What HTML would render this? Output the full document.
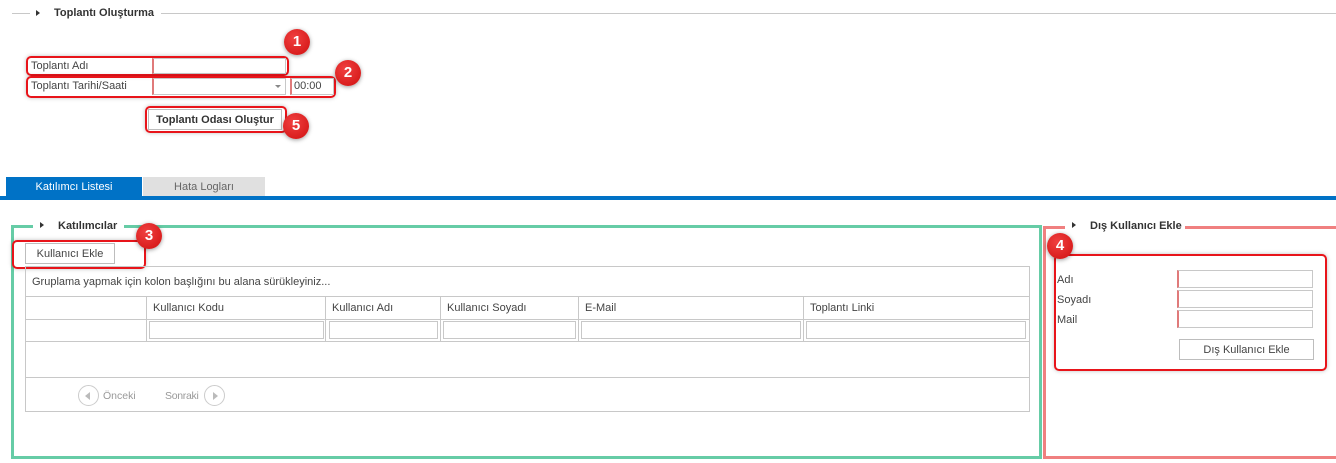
<!DOCTYPE html>
<html><head><meta charset="utf-8"><style>
*{box-sizing:border-box;margin:0;padding:0}
body{width:1336px;height:463px;background:#fff;position:relative;overflow:hidden;font-family:"Liberation Sans",sans-serif;font-size:11px;color:#444}
.a{position:absolute}
.t{position:absolute;white-space:nowrap;line-height:13px}
.inp{position:absolute;border:1px solid #c8c8c8;background:#fff}
.req{border-left:2px solid #e07a7a}
.rb{position:absolute;border:2px solid #e8141a;border-radius:5px;box-shadow:0 0 4px rgba(0,0,0,.25)}
.c{position:absolute;width:26px;height:26px;border-radius:50%;background:radial-gradient(circle at 40% 35%,#f04040,#d01010);color:#fff;font-size:15px;font-weight:bold;text-align:center;line-height:26px;box-shadow:0 1px 4px rgba(0,0,0,.4)}
.btn{position:absolute;border:1px solid #bdbdbd;background:#fff;text-align:center;color:#444}
.tri{position:absolute;width:0;height:0;border-top:3px solid transparent;border-bottom:3px solid transparent;border-left:4px solid #333}
.g{position:absolute;background:#c8c8c8}
</style></head><body>
<div class="a" style="left:12px;top:13px;width:18px;height:1px;background:#c8c8c8"></div>
<div class="tri" style="left:36px;top:10px"></div>
<div class="t" style="left:54px;top:7px;font-weight:bold;color:#333">Toplantı Oluşturma</div>
<div class="a" style="left:161px;top:13px;width:1175px;height:1px;background:#c8c8c8"></div>

<div class="rb" style="left:26px;top:56px;width:263px;height:20px"></div>
<div class="t" style="left:31px;top:60px">Toplantı Adı</div>
<div class="inp req" style="left:152px;top:58px;width:134px;height:16px"></div>
<div class="rb" style="left:26px;top:76px;width:310px;height:22px"></div>
<div class="t" style="left:31px;top:80px">Toplantı Tarihi/Saati</div>
<div class="inp req" style="left:152px;top:78px;width:134px;height:17px"></div>
<div class="a" style="left:275px;top:85px;border-left:3px solid transparent;border-right:3px solid transparent;border-top:3px solid #888"></div>
<div class="inp req" style="left:290px;top:78px;width:44px;height:17px"></div>
<div class="t" style="left:294px;top:80px">00:00</div>
<div class="rb" style="left:145px;top:106px;width:142px;height:27px"></div>
<div class="btn" style="left:148px;top:109px;width:134px;height:21px;font-weight:bold;color:#333;line-height:21px">Toplantı Odası Oluştur</div>
<div class="c" style="left:284px;top:29px">1</div>
<div class="c" style="left:335px;top:60px">2</div>
<div class="c" style="left:283px;top:113px">5</div>

<div class="a" style="left:6px;top:177px;width:136px;height:20px;background:#0072c6;color:#fff;text-align:center;line-height:20px">Katılımcı Listesi</div>
<div class="a" style="left:143px;top:177px;width:122px;height:19px;background:#e0e0e0;color:#666;text-align:center;line-height:20px">Hata Logları</div>
<div class="a" style="left:0;top:196px;width:1336px;height:4px;background:#0072c6"></div>

<div class="a" style="left:11px;top:225px;width:1031px;height:234px;border:3px solid #66cca6;border-top:0"></div>
<div class="a" style="left:11px;top:225px;width:22px;height:3px;background:#66cca6"></div>
<div class="a" style="left:124px;top:225px;width:918px;height:3px;background:#66cca6"></div>
<div class="tri" style="left:40px;top:222px"></div>
<div class="t" style="left:58px;top:220px;font-weight:bold;color:#333">Katılımcılar</div>
<div class="rb" style="left:12px;top:240px;width:134px;height:29px"></div>
<div class="btn" style="left:25px;top:243px;width:90px;height:21px;line-height:20px">Kullanıcı Ekle</div>
<div class="c" style="left:136px;top:223px">3</div>

<div class="a" style="left:25px;top:266px;width:1005px;height:146px;border:1px solid #c8c8c8"></div>
<div class="t" style="left:32px;top:276px">Gruplama yapmak için kolon başlığını bu alana sürükleyiniz...</div>
<div class="g" style="left:25px;top:296px;width:1005px;height:1px"></div>
<div class="g" style="left:25px;top:319px;width:1005px;height:1px"></div>
<div class="g" style="left:25px;top:341px;width:1005px;height:1px"></div>
<div class="g" style="left:25px;top:377px;width:1005px;height:1px"></div>
<div class="g" style="left:146px;top:296px;width:1px;height:45px"></div>
<div class="g" style="left:325px;top:296px;width:1px;height:45px"></div>
<div class="g" style="left:440px;top:296px;width:1px;height:45px"></div>
<div class="g" style="left:578px;top:296px;width:1px;height:45px"></div>
<div class="g" style="left:803px;top:296px;width:1px;height:45px"></div>
<div class="t" style="left:153px;top:302px">Kullanıcı Kodu</div>
<div class="t" style="left:332px;top:302px">Kullanıcı Adı</div>
<div class="t" style="left:447px;top:302px">Kullanıcı Soyadı</div>
<div class="t" style="left:585px;top:302px">E-Mail</div>
<div class="t" style="left:810px;top:302px">Toplantı Linki</div>
<div class="inp" style="left:149px;top:321px;width:175px;height:18px"></div>
<div class="inp" style="left:329px;top:321px;width:109px;height:18px"></div>
<div class="inp" style="left:443px;top:321px;width:133px;height:18px"></div>
<div class="inp" style="left:581px;top:321px;width:220px;height:18px"></div>
<div class="inp" style="left:806px;top:321px;width:220px;height:18px"></div>
<div class="a" style="left:78px;top:385px;width:21px;height:21px;border:1px solid #ccc;border-radius:50%"></div>
<div class="a" style="left:85px;top:392px;border-top:4px solid transparent;border-bottom:4px solid transparent;border-right:5px solid #bbb"></div>
<div class="t" style="left:103px;top:390px;color:#999;font-size:10.5px">Önceki</div>
<div class="t" style="left:165px;top:390px;color:#999;font-size:10.5px;letter-spacing:-0.3px">Sonraki</div>
<div class="a" style="left:204px;top:385px;width:21px;height:21px;border:1px solid #ccc;border-radius:50%"></div>
<div class="a" style="left:213px;top:392px;border-top:4px solid transparent;border-bottom:4px solid transparent;border-left:5px solid #bbb"></div>

<div class="a" style="left:1043px;top:226px;width:300px;height:233px;border:3px solid #f08080;border-top:0"></div>
<div class="a" style="left:1043px;top:226px;width:22px;height:3px;background:#f08080"></div>
<div class="a" style="left:1185px;top:226px;width:151px;height:3px;background:#f08080"></div>
<div class="tri" style="left:1072px;top:222px"></div>
<div class="t" style="left:1090px;top:220px;font-weight:bold;color:#333">Dış Kullanıcı Ekle</div>
<div class="rb" style="left:1054px;top:254px;width:273px;height:117px"></div>
<div class="c" style="left:1047px;top:233px">4</div>
<div class="t" style="left:1057px;top:274px">Adı</div>
<div class="t" style="left:1057px;top:294px">Soyadı</div>
<div class="t" style="left:1057px;top:314px">Mail</div>
<div class="inp req" style="left:1177px;top:270px;width:136px;height:18px"></div>
<div class="inp req" style="left:1177px;top:290px;width:136px;height:18px"></div>
<div class="inp req" style="left:1177px;top:310px;width:136px;height:18px"></div>
<div class="btn" style="left:1179px;top:339px;width:135px;height:21px;line-height:20px">Dış Kullanıcı Ekle</div>
</body></html>
